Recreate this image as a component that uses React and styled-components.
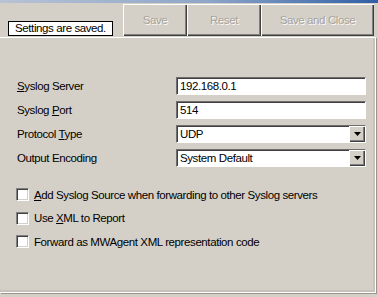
import React from "react";
import styled, { createGlobalStyle } from "styled-components";

const Global = createGlobalStyle`
  html, body { margin: 0; padding: 0; }
  body {
    background: #d4d0c8;
    font-family: "Liberation Sans", Arial, sans-serif;
    font-size: 11.5px;
    letter-spacing: -0.4px;
    color: #000;
  }
`;

const Window = styled.div`
  width: 378px;
  height: 297px;
  overflow: hidden;
  background: #d4d0c8;
  display: flex;
  flex-direction: column;
`;

const TitleStrip = styled.div`
  height: 3px;
  background: linear-gradient(90deg, #b8c2d4 0%, #8ea6c8 55%, #2f5fa6 100%);
`;

const Toolbar = styled.div`
  height: 34px;
  box-sizing: border-box;
  padding: 1px 4px 1px 8px;
  display: flex;
  align-items: stretch;
`;

const Status = styled.div`
  align-self: flex-end;
  width: 105px;
  height: 15px;
  box-sizing: border-box;
  border: 1px solid #000;
  background: #fff;
  display: flex;
  align-items: center;
  justify-content: center;
  white-space: nowrap;
  line-height: 13px;
  margin-right: 10px;
`;

const Button = styled.button`
  width: ${(p) => p.$w}px;
  height: 32px;
  margin: 0;
  padding: 0;
  border: none;
  background: #d4d0c8;
  box-shadow: inset 1px 1px 0 #fff, inset -1px -1px 0 #404040, inset -2px -2px 0 #808080;
  font: inherit;
  letter-spacing: inherit;
  color: #a7a39b;
  text-shadow: 1px 1px 0 #fbfbf9;
`;

const Panel = styled.div`
  height: 256px;
  box-sizing: border-box;
  border-top: 1px solid #fff;
  border-right: 1px solid #fff;
  border-bottom: 1px solid #fff;
  margin-right: 2px;
  box-shadow: inset -2px -2px 0 #c6c2ba, 1px 1px 0 #9a968f;
  padding: 39px 0 0 17px;
  display: flex;
  flex-direction: column;
`;

const Form = styled.div`
  display: grid;
  grid-template-columns: 159px 190px;
  grid-auto-rows: 18px;
  row-gap: 6px;
  align-items: center;
`;

const Label = styled.div`
  line-height: 14px;
`;

const Key = styled.span`
  text-decoration: underline;
  text-underline-offset: 1px;
`;

const Field = styled.div`
  height: 18px;
  box-sizing: border-box;
  border: 1px solid;
  border-color: #6e6e6e #fff #fff #6e6e6e;
  box-shadow: inset 1px 1px 0 #404040;
  background: #fff;
  display: flex;
  align-items: center;
  padding-left: 3px;
  line-height: 14px;
`;

const FieldText = styled.span`
  flex: 1;
`;

const DropButton = styled.div`
  width: 16px;
  height: 16px;
  box-sizing: border-box;
  background: #d4d0c8;
  box-shadow: inset 1px 1px 0 #fff, inset -1px -1px 0 #404040, inset -2px -2px 0 #808080;
  display: flex;
  align-items: center;
  justify-content: center;
`;

const Checks = styled.div`
  margin-top: 21px;
  display: flex;
  flex-direction: column;
  gap: 10px;
`;

const CheckRow = styled.div`
  display: flex;
  align-items: center;
  height: 13.5px;
  margin-left: -1px;
`;

const Box = styled.div`
  width: 13px;
  height: 13px;
  box-sizing: border-box;
  border: 1px solid;
  border-color: #808080 #fff #fff #808080;
  box-shadow: inset 1px 1px 0 #404040, inset -1px -1px 0 #d4d0c8;
  background: #fff;
  margin-right: 5px;
`;

const Arrow = () => (
  <svg width="7" height="4" viewBox="0 0 7 4">
    <path d="M0 0h7L3.5 4z" fill="#000" />
  </svg>
);

export default function App() {
  return (
    <>
      <Global />
      <Window>
        <TitleStrip />
        <Toolbar>
          <Status>Settings are saved.</Status>
          <Button $w={64}>Save</Button>
          <Button $w={74}>Reset</Button>
          <Button $w={113}>Save and Close</Button>
        </Toolbar>
        <Panel>
          <Form>
            <Label><Key>S</Key>yslog Server</Label>
            <Field><FieldText>192.168.0.1</FieldText></Field>
            <Label>Syslog <Key>P</Key>ort</Label>
            <Field><FieldText>514</FieldText></Field>
            <Label>Protocol <Key>T</Key>ype</Label>
            <Field><FieldText>UDP</FieldText><DropButton><Arrow /></DropButton></Field>
            <Label>Output Encoding</Label>
            <Field><FieldText>System Default</FieldText><DropButton><Arrow /></DropButton></Field>
          </Form>
          <Checks>
            <CheckRow><Box /><span><Key>A</Key>dd Syslog Source when forwarding to other Syslog servers</span></CheckRow>
            <CheckRow><Box /><span>Use <Key>X</Key>ML to Report</span></CheckRow>
            <CheckRow><Box /><span>Forward as MWAgent XML representation code</span></CheckRow>
          </Checks>
        </Panel>
      </Window>
    </>
  );
}
